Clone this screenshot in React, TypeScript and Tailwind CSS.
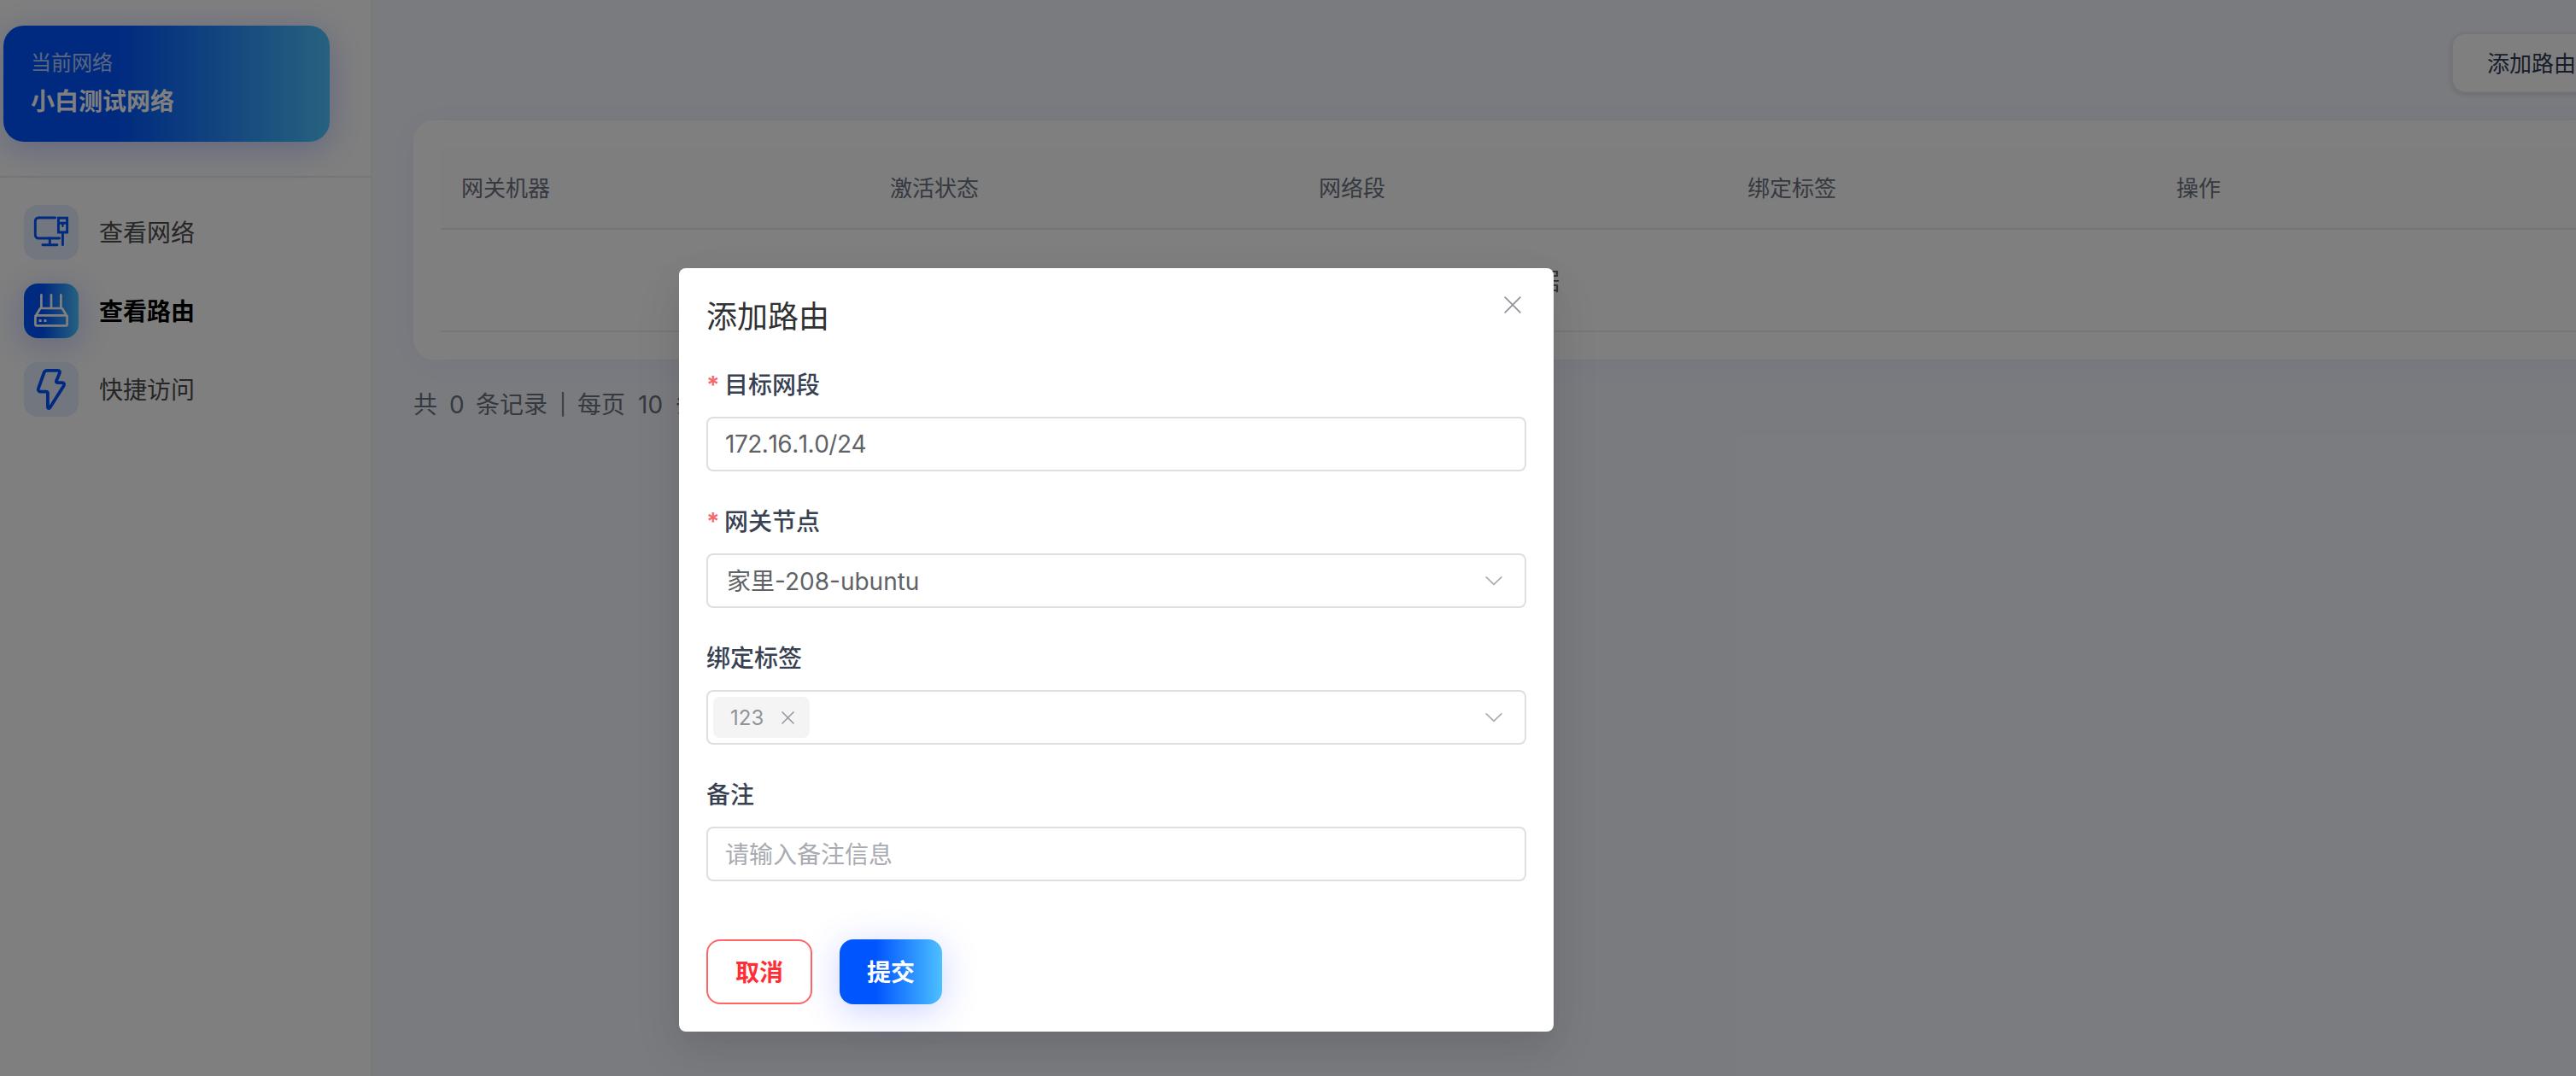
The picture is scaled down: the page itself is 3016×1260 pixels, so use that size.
import React from "react";

function MonitorIcon() {
  return (
    <svg viewBox="0 0 64 64" className="size-16" fill="none" stroke="currentColor" strokeWidth="2.9" strokeLinecap="round" strokeLinejoin="round">
      <path d="M36.6 15H17a3.7 3.7 0 0 0-3.7 3.7v16.6A3.7 3.7 0 0 0 17 39h24.6" />
      <path d="M30.3 39v7.7M21.9 46.7h17" />
      <path d="M40.4 15.3h10.2V32H40.4zM40.4 21.3h10.2M45.4 33v13.7" strokeLinejoin="miter" />
      <path d="M43.8 22h3.2l-.9 4h-1.4z" fill="currentColor" stroke="none" />
    </svg>
  );
}

function RouterIcon() {
  return (
    <svg viewBox="0 0 64 64" className="size-16" fill="none" stroke="currentColor" strokeWidth="2.7" strokeLinecap="round" strokeLinejoin="round">
      <path d="M20.4 13.4V28M32 13.4V28M43.4 13.4V28" />
      <path d="M13.6 38.2 19.2 29h25.6l5.6 9.2" />
      <rect x="13.4" y="37.4" width="37.2" height="12" rx="2" />
      <path d="M17.6 41.9h3v3h-3zM23.4 41.9h3v3h-3z" fill="currentColor" stroke="none" />
    </svg>
  );
}

function BoltIcon() {
  return (
    <svg viewBox="0 0 64 64" className="size-16" fill="none" stroke="currentColor" strokeWidth="3.8" strokeLinecap="round" strokeLinejoin="round">
      <path d="M27.4 9.9h12.4c1.7 0 2.6 1.5 2 3l-3.9 9.3c-.4 1 .2 1.9 1.3 1.9h5.6c2 0 3 1.9 2 3.5L30.5 53.2c-.9 1.4-2.6.8-2.6-.8V36.6c0-1.2-.7-1.9-1.9-1.9h-6.4c-2 0-3.3-1.7-2.7-3.6l6.6-18.6c.6-1.7 2-2.6 3.9-2.6z" />
    </svg>
  );
}

function CloseIcon({ className, width }: { className: string; width: number }) {
  return (
    <svg viewBox="0 0 20 20" className={className} fill="none" stroke="currentColor" strokeWidth={width}>
      <path d="M.7.7l18.6 18.6M19.3.7.7 19.3" />
    </svg>
  );
}

function ChevronIcon() {
  return (
    <svg viewBox="0 0 20 12" className="h-3 w-5 text-[#a8abb2]" fill="none" stroke="currentColor" strokeWidth="1.7">
      <path d="M.6 1.3 10 10.3l9.4-9" />
    </svg>
  );
}

function MenuItem({ icon, label, active = false }: { icon: React.ReactNode; label: string; active?: boolean }) {
  return (
    <a className="flex items-center gap-6">
      <span
        className={
          active
            ? "rounded-2xl bg-[linear-gradient(90deg,#0055ff_35%,#4dc4ff)] text-white shadow-[0_8px_40px_rgba(50,80,255,0.3)]"
            : "rounded-2xl bg-[#e4eeff] text-[#0055ff]"
        }
      >
        {icon}
      </span>
      <span className={active ? "pt-0.5 font-semibold text-black" : "pt-0.5 text-[#4d4d4d]"}>{label}</span>
    </a>
  );
}

function Sidebar() {
  return (
    <aside className="flex w-[436px] shrink-0 flex-col border-r-2 border-[#f0f0f0] bg-white">
      <div className="border-b-2 border-[#ececec] pt-[30px] pb-10 pl-1">
        <div className="flex h-[136px] w-[382px] flex-col rounded-3xl bg-[linear-gradient(90deg,#0055ff_35%,#4dc4ff)] px-8 pt-6 text-white shadow-[0_8px_40px_rgba(50,80,255,0.3)]">
          <span className="text-2xl leading-10 opacity-70">当前网络</span>
          <span className="mt-[3px] font-semibold leading-[44px]">小白测试网络</span>
        </div>
      </div>
      <nav className="flex flex-col gap-7 pt-8 pl-7">
        <MenuItem icon={<MonitorIcon />} label="查看网络" />
        <MenuItem icon={<RouterIcon />} label="查看路由" active />
        <MenuItem icon={<BoltIcon />} label="快捷访问" />
      </nav>
    </aside>
  );
}

const columns = ["网关机器", "激活状态", "网络段", "绑定标签", "操作"];

function RouteTable() {
  return (
    <section className="h-[280px] w-[2574px] rounded-3xl bg-white p-8 shadow-[0_4px_40px_rgba(60,80,180,0.06)]">
      <div className="grid h-24 grid-cols-5 items-center border-b-2 border-[#ebebef] bg-[#fcfcfc] text-[26px] text-[#6b7280]">
        {columns.map((c) => (
          <span key={c} className="pt-px pl-6">{c}</span>
        ))}
      </div>
      <div className="flex h-[120px] items-center justify-center border-b-2 border-[#ebeef5] pt-[3px] pr-0.5 text-[#606266]">暂无数据</div>
    </section>
  );
}

function Content() {
  return (
    <main className="flex min-w-0 flex-1 flex-col overflow-hidden bg-[#f5f7ff] pl-12">
      <header className="flex h-[141px] items-start justify-end pt-[38px]">
        <button className="-mr-[42px] h-[71px] shrink-0 rounded-2xl border-2 border-[#e9eaee] bg-white px-10 pt-0.5 text-[26px] leading-none text-[#2f3a55] shadow-[0_2px_6px_rgba(0,0,0,0.12)]">
          添加路由
        </button>
      </header>
      <RouteTable />
      <footer className="mt-[33px] flex h-10 items-center text-[#6b7280]">
        <span>共</span>
        <span className="ml-[14px] w-[18px]">0</span>
        <span className="ml-[13px]">条记录</span>
        <span className="ml-[14px] w-2 text-2xl">|</span>
        <span className="ml-[13px]">每页</span>
        <span className="ml-[15px] w-[30px]">10</span>
        <span className="ml-[14px]">条</span>
      </footer>
    </main>
  );
}

function Field({ label, required = false, children }: { label: string; required?: boolean; children: React.ReactNode }) {
  return (
    <div className="mb-9 flex flex-col">
      <label className="mb-4 flex h-11 items-center pt-0.5 font-medium text-[#374151]">
        {required && <span className="mr-2 w-[13px] font-bold text-[#f56c6c]">*</span>}
        {label}
      </label>
      <div className="flex h-16 items-center rounded-lg border-2 border-[#dcdfe6] font-normal text-[#606266]">{children}</div>
    </div>
  );
}

function RouteDialog() {
  return (
    <div className="h-[894px] w-[1024px] rounded-lg bg-white px-8 shadow-[0_24px_64px_8px_rgba(0,0,0,0.04),0_16px_40px_rgba(0,0,0,0.08)]">
      <div className="flex h-[114px] items-start justify-between pt-8">
        <h2 className="pt-px text-4xl leading-12 text-[#303133]">添加路由</h2>
        <CloseIcon className="mt-[1px] mr-1.5 size-5 text-[#909399]" width={1.7} />
      </div>
      <Field label="目标网段" required>
        <span className="pl-5 tracking-[-0.5px] [font-kerning:none]">172.16.1.0/24</span>
      </Field>
      <Field label="网关节点" required>
        <span className="flex-1 pt-px pl-[22px]">家里-208-ubuntu</span>
        <span className="pr-[26px]"><ChevronIcon /></span>
      </Field>
      <Field label="绑定标签">
        <span className="ml-1.5 flex h-12 w-[113px] items-center rounded-lg bg-[#f4f4f5] pl-5 text-2xl text-[#909399]">
          <span className="w-[60px] pt-px">123</span>
          <CloseIcon className="size-[15px]" width={1.9} />
        </span>
        <span className="ml-auto pr-[26px]"><ChevronIcon /></span>
      </Field>
      <Field label="备注">
        <span className="pt-px pl-5 text-[#a8abb2]">请输入备注信息</span>
      </Field>
      <div className="flex gap-8 pt-8 font-semibold">
        <button className="h-[76px] w-[124px] rounded-2xl border-2 border-[#ff6467] pt-px text-[#ff2d35]">取消</button>
        <button className="h-[76px] w-[120px] rounded-2xl bg-[linear-gradient(90deg,#0055ff_35%,#4dc0ff)] pt-px text-white shadow-[0_8px_40px_rgba(50,80,255,0.25)]">提交</button>
      </div>
    </div>
  );
}

export default function App() {
  return (
    <div className="relative flex h-[1260px] w-[3016px] overflow-hidden bg-white font-['Inter','Noto_Sans_CJK_SC',sans-serif] text-[28px] leading-10 whitespace-nowrap">
      <Sidebar />
      <Content />
      <div className="absolute inset-0 bg-black/50 pt-[314px] pl-[795px]">
        <RouteDialog />
      </div>
    </div>
  );
}
